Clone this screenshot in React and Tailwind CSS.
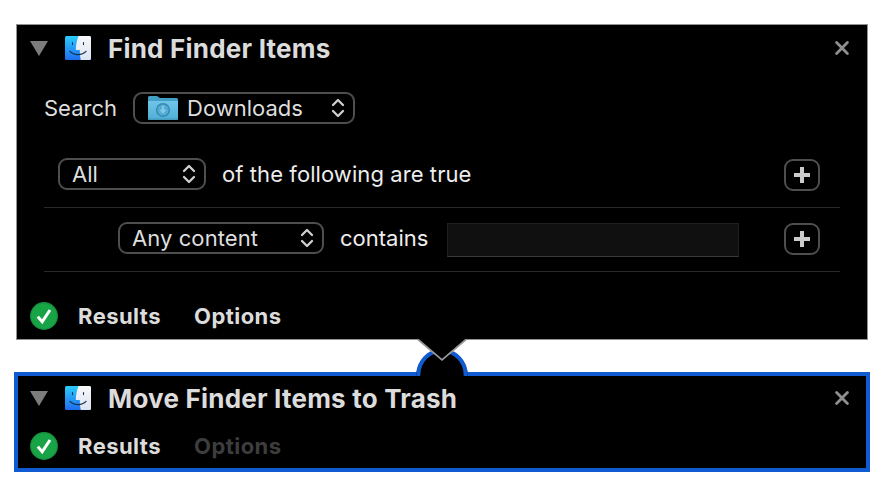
import React from "react";

function FinderIcon() {
  return (
    <svg className="block h-6 w-[26px] shrink-0" viewBox="0 0 26 24">
      <defs>
        <linearGradient id="finderBlue" x1="0" y1="0" x2="0" y2="1">
          <stop offset="0" stopColor="#29cdfb" />
          <stop offset="1" stopColor="#1f6df0" />
        </linearGradient>
        <linearGradient id="finderWhite" x1="0" y1="0" x2="0" y2="1">
          <stop offset="0" stopColor="#f8f8fa" />
          <stop offset="1" stopColor="#dbe4f1" />
        </linearGradient>
      </defs>
      <rect width="26" height="24" rx="1.5" fill="url(#finderBlue)" />
      <path d="M13.6 0H24.5Q26 0 26 1.5V22.5Q26 24 24.5 24H15.8C15.1 21 14.8 17.5 14.8 14H10.8C10.9 9 11.8 4 13.6 0Z" fill="url(#finderWhite)" />
      <path d="M7.5 6.5V8.6M18.5 6.5V8.6" stroke="#17324f" strokeWidth="1.1" strokeLinecap="round" />
      <path d="M5 15.3C9 19.6 17 19.6 21 15.3" fill="none" stroke="#17324f" strokeWidth="1.2" strokeLinecap="round" />
    </svg>
  );
}

function FolderIcon() {
  return (
    <svg className="block h-6 w-[30px] shrink-0" viewBox="0 0 30 24">
      <defs>
        <linearGradient id="folderFront" x1="0" y1="0" x2="0" y2="1">
          <stop offset="0" stopColor="#6fc5e8" />
          <stop offset="1" stopColor="#50aed6" />
        </linearGradient>
      </defs>
      <path d="M0 1.5Q0 0 1.5 0H8.5Q9.6 0 10.4 1T12.5 2H28.5Q30 2 30 3.5V8H0Z" fill="#439fc5" />
      <path d="M0 5H30V22.5Q30 24 28.5 24H1.5Q0 24 0 22.5Z" fill="url(#folderFront)" />
      <path d="M0 22.5H30Q30 24 28.5 24H1.5Q0 24 0 22.5Z" fill="#459cbd" />
      <circle cx="15" cy="14" r="6.3" fill="#56afd6" stroke="#3689b3" strokeWidth="1.5" />
      <path d="M13.2 9H16.8V13.2H19.8L15 18.6L10.2 13.2H13.2Z" fill="#7cc9e9" stroke="#3c8fb9" strokeWidth=".5" />
    </svg>
  );
}

function Chevrons() {
  return (
    <svg className="block h-5 w-[14px] shrink-0" viewBox="0 0 14 20" fill="none" stroke="#cfcfcf" strokeWidth="2.3" strokeLinecap="round" strokeLinejoin="round">
      <path d="M2 7L7 2L12 7M2 13L7 18L12 13" />
    </svg>
  );
}

function CheckBadge() {
  return (
    <svg className="block h-7 w-7 shrink-0" viewBox="0 0 28 28">
      <circle cx="14" cy="14" r="13.4" fill="#17a346" stroke="#168b3e" strokeWidth="1.1" />
      <path d="M7.8 14.6L12.2 19.8L20 8" fill="none" stroke="#fff" strokeWidth="3" />
    </svg>
  );
}

function PlusButton() {
  return (
    <button className="flex h-8 w-9 shrink-0 items-center justify-center rounded-[9px] border-2 border-[#4e4e4e]">
      <svg className="block h-4 w-4" viewBox="0 0 16 16">
        <path d="M6 0H10V6H16V10H10V16H6V10H0V6H6Z" fill="#cbcbcb" />
      </svg>
    </button>
  );
}

function Header({ title }) {
  return (
    <div className="flex h-[46px] items-center">
      <svg className="ml-[13px] block h-[15px] w-[18px]" viewBox="0 0 18 15">
        <path d="M0 0H18L9 15Z" fill="#7c7c7c" />
      </svg>
      <div className="ml-[17px]"><FinderIcon /></div>
      <h2 className="ml-[17px] pt-[2px] text-[26px] font-bold leading-8 tracking-[0.21px] text-[#dcdcdc]">{title}</h2>
      <svg className="mr-[18px] ml-auto block h-[14px] w-[14px]" viewBox="0 0 14 14">
        <path d="M1.6 1.6L12.4 12.4M12.4 1.6L1.6 12.4" stroke="#8f8f8f" strokeWidth="2.8" strokeLinecap="round" />
      </svg>
    </div>
  );
}

function Footer({ disabled }) {
  return (
    <div className="ml-[13px] flex h-7 items-center text-[22px] font-bold tracking-[0.45px] text-[#dcdcdc]">
      <CheckBadge />
      <span className="ml-5 w-[116px]">Results</span>
      <span className={disabled ? "text-[#3d3d3d]" : ""}>Options</span>
    </div>
  );
}

export default function App() {
  return (
    <main className="relative h-[494px] w-[884px] overflow-hidden whitespace-nowrap bg-white pt-6 font-['Inter',sans-serif] text-[22px] leading-8 text-[#dedede]">
      <section className="ml-4 h-[316px] w-[852px] border border-[#929292] bg-black">
        <Header title="Find Finder Items" />
        <div className="mt-[21px] ml-[27px] flex h-8 items-center">
          <span className="w-[89px]">Search</span>
          <div className="flex h-8 w-[222px] items-center rounded-[9px] border-2 border-[#4e4e4e] pr-2 pl-[13px]">
            <FolderIcon />
            <span className="ml-[9px]">Downloads</span>
            <div className="ml-auto"><Chevrons /></div>
          </div>
        </div>
        <div className="mt-[34px] ml-[27px] w-[796px]">
          <div className="flex h-[50px] items-start border-b border-[#292929] pr-5 pl-[14px]">
            <div className="flex h-8 w-[148px] items-center justify-between rounded-[9px] border-2 border-[#4e4e4e] pr-2 pl-3">
              <span>All</span>
              <Chevrons />
            </div>
            <span className="ml-4 tracking-[0.08px] text-[#ededed]">of the following are true</span>
            <div className="mt-px ml-auto"><PlusButton /></div>
          </div>
          <div className="flex h-16 items-start border-b border-[#292929] pt-[14px] pr-5 pl-[74px]">
            <div className="flex h-8 w-[206px] items-center justify-between rounded-[9px] border-2 border-[#4e4e4e] pr-2 pl-3">
              <span className="tracking-[0.08px]">Any content</span>
              <Chevrons />
            </div>
            <span className="ml-4 w-[107px] text-[#ededed]">contains</span>
            <div className="mt-px h-[34px] w-[292px] border border-[#202020] border-b-[#3b3b3b] bg-[#101010]" />
            <div className="mt-px ml-auto"><PlusButton /></div>
          </div>
        </div>
        <div className="mt-[30px]"><Footer /></div>
      </section>
      <section className="mt-8 ml-[14px] h-[100px] w-[856px] border-4 border-[#105bd1] bg-black">
        <div className="-mt-px -mr-px -ml-px"><Header title="Move Finder Items to Trash" /></div>
        <div className="mt-[11px] -ml-px"><Footer disabled /></div>
      </section>
      <svg className="absolute top-[336px] left-[412px] h-[42px] w-[60px]" viewBox="412 336 60 42">
        <path d="M416.3 376A25.7 26.5 0 0 1 467.7 376Z" fill="#000" />
        <path d="M418.3 376V375A23.7 24.5 0 0 1 465.7 375V376" fill="none" stroke="#105bd1" strokeWidth="4" />
        <path d="M418 338H466V339.5L442 360L418 339.5Z" fill="#000" />
        <path d="M418 339.5L442 360L466 339.5" fill="none" stroke="#999" strokeWidth="1.7" />
      </svg>
    </main>
  );
}
